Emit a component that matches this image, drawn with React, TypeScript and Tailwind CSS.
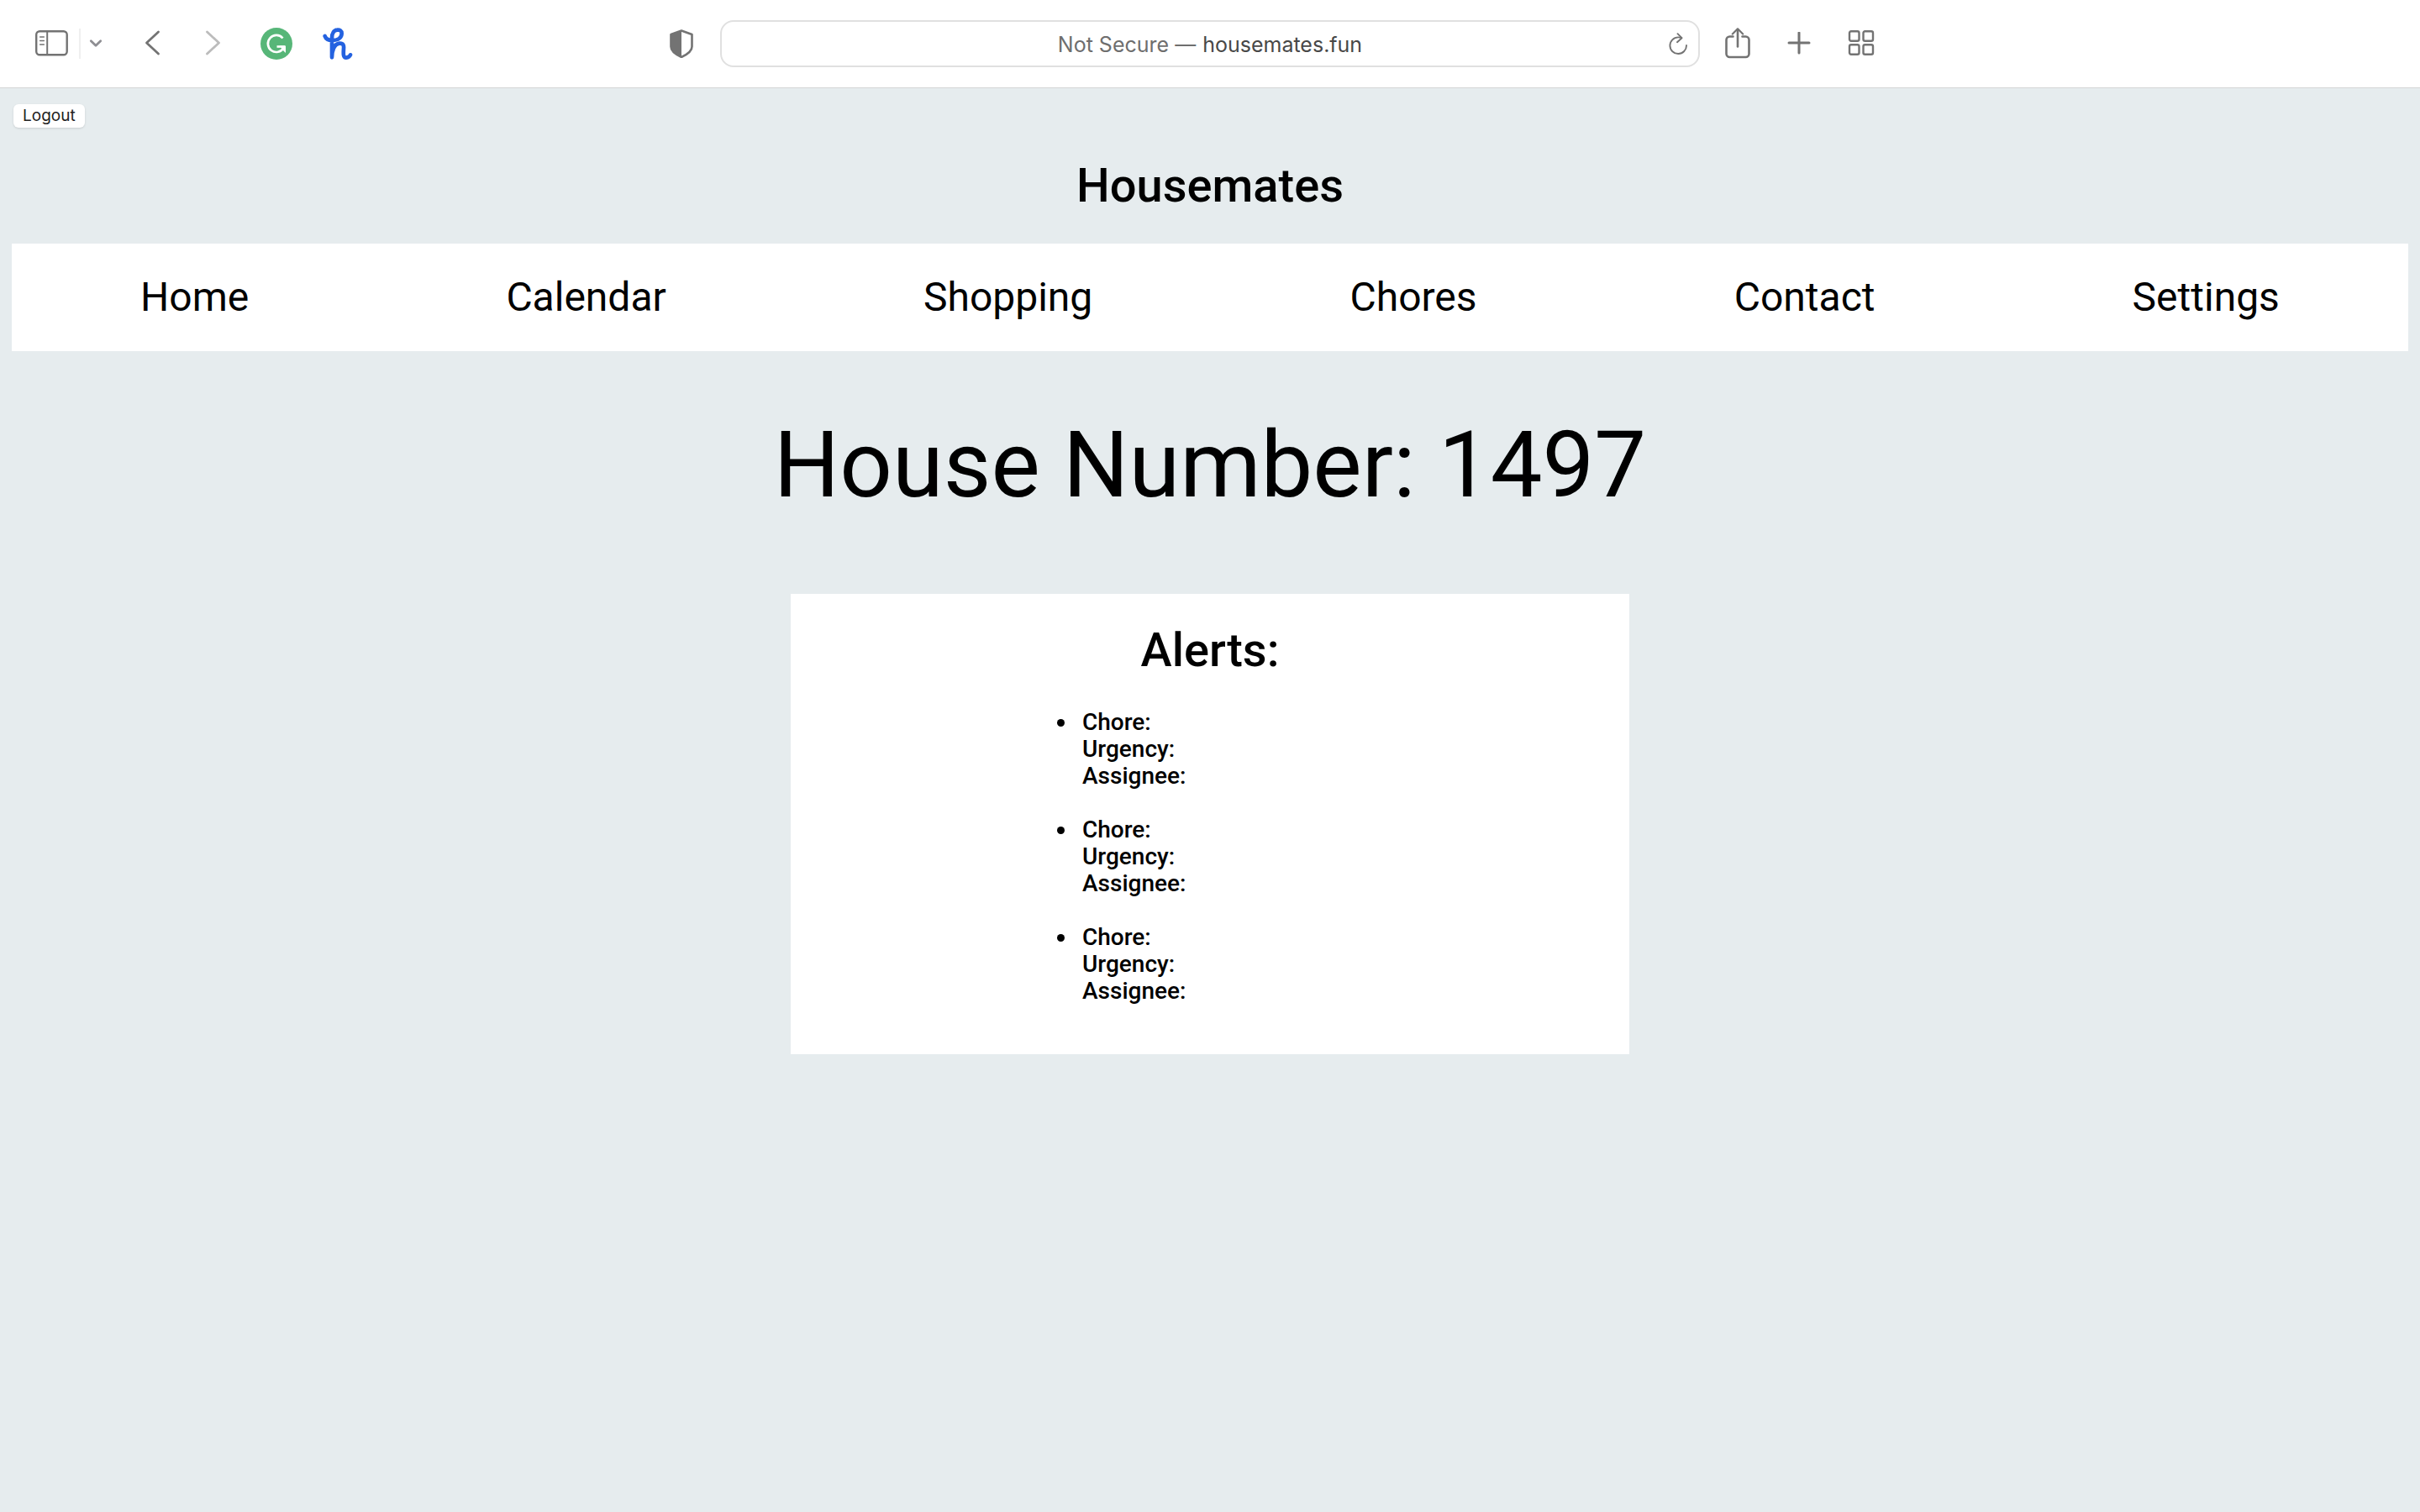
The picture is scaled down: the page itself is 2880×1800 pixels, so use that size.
import type { ReactNode } from "react";

const navLinks = ["Home", "Calendar", "Shopping", "Chores", "Contact", "Settings"];
const alerts = [1, 2, 3];

function IconButton({ label, children }: { label: string; children: ReactNode }) {
  return (
    <button type="button" aria-label={label} className="flex shrink-0 items-center justify-center text-[#737373]">
      {children}
    </button>
  );
}

function SidebarIcon() {
  return (
    <svg className="h-8 w-10" viewBox="0 0 40 32" fill="none" stroke="currentColor" strokeWidth="2.400">
      <rect x="2.200" y="1.200" width="36.500" height="28" rx="4" />
      <path d="M15.200 1.200v28" strokeWidth="2" />
      <path d="M6.700 8h4.600M6.700 12.500h4.600M6.700 17h4.600" strokeWidth="1.600" strokeLinecap="round" />
    </svg>
  );
}

function ChevronDownIcon() {
  return (
    <svg className="h-4 w-4 text-[#8e8e93]" viewBox="0 0 16 16" fill="none" stroke="currentColor" strokeWidth="2.800" strokeLinecap="round" strokeLinejoin="round">
      <path d="M2.300 4.700 8 10.200l5.700-5.500" />
    </svg>
  );
}

function BackIcon() {
  return (
    <svg className="h-8 w-5" viewBox="0 0 20 32" fill="none" stroke="currentColor" strokeWidth="2.800" strokeLinecap="round" strokeLinejoin="round">
      <path d="M16.500 2 2.500 15l14 13" />
    </svg>
  );
}

function ForwardIcon() {
  return (
    <svg className="h-8 w-5 text-[#bcbcbc]" viewBox="0 0 20 32" fill="none" stroke="currentColor" strokeWidth="2.800" strokeLinecap="round" strokeLinejoin="round">
      <path d="m2.500 2 14 13-14 13" />
    </svg>
  );
}

function GrammarlyIcon() {
  return (
    <svg className="h-[38px] w-[38px]" viewBox="0 0 38 38" fill="none">
      <circle cx="19" cy="19" r="19" fill="#57b678" />
      <path d="M26.500 12.500A10 10 0 1 0 27.500 24" stroke="#fff" strokeWidth="2.700" />
      <path d="M19.500 22.500H29" stroke="#fff" strokeWidth="2.600" />
      <path d="M22.500 21.500H30V30l-2.600-2.500z" fill="#fff" />
    </svg>
  );
}

function HoneyIcon() {
  return (
    <svg className="h-[38px] w-9" viewBox="0 0 108 114" fill="none" stroke="#2462e0" strokeWidth="14" strokeLinecap="round" strokeLinejoin="round">
      <path d="M8 30C12 42 20 45 34 45C56 45 68 35 68 20C68 11 61 7 52 8C40 9 33 20 33 36V106C33 84 40 58 60 56C74 55 76 64 75 74C74 90 72 107 84 107C92 107 98 100 99 97" />
    </svg>
  );
}

function ShieldIcon() {
  return (
    <svg className="h-[34px] w-7" viewBox="0 0 28 34" fill="none">
      <path d="M14 1.500 26.500 6v14.500c0 6-6 9.500-12.500 12.500C7.500 30 1.500 26.500 1.500 20.500V6z" stroke="currentColor" strokeWidth="2.600" strokeLinejoin="round" />
      <path d="M14 1.500V33C7.500 30 1.500 26.500 1.500 20.500V6z" fill="currentColor" />
    </svg>
  );
}

function ReloadIcon() {
  return (
    <svg className="h-[26px] w-6" viewBox="0 0 24 26" fill="none" stroke="currentColor" strokeWidth="1.900" strokeLinecap="round" strokeLinejoin="round">
      <path d="M22 15A9.800 9.800 0 1 1 12.200 5.400q2.200 0 4 .700" />
      <path d="m11.500 1.200 5 5-5.500 5" />
    </svg>
  );
}

function ShareIcon() {
  return (
    <svg className="h-[38px] w-[30px]" viewBox="0 0 30 38" fill="none" stroke="currentColor" strokeWidth="2.600" strokeLinecap="round" strokeLinejoin="round">
      <path d="M9.500 10.500H5.500a4 4 0 0 0-4 4v16.500a4 4 0 0 0 4 4h19a4 4 0 0 0 4-4V14.500a4 4 0 0 0-4-4h-4" />
      <path d="M15 22.500V2" />
      <path d="M8.800 7.500 15 1.300 21.200 7.500" strokeWidth="2.200" />
    </svg>
  );
}

function PlusIcon() {
  return (
    <svg className="h-7 w-7" viewBox="0 0 28 28" fill="none" stroke="currentColor" strokeWidth="3" strokeLinecap="round">
      <path d="M14 1v24M2 13h24" />
    </svg>
  );
}

function TabsIcon() {
  return (
    <svg className="h-8 w-8" viewBox="0 0 32 32" fill="none" stroke="currentColor" strokeWidth="2.400">
      <rect x="2" y="1.300" width="11.500" height="11.500" rx="2" />
      <rect x="18.500" y="1.300" width="11.500" height="11.500" rx="2" />
      <rect x="2" y="17.300" width="11.500" height="11.500" rx="2" />
      <rect x="18.500" y="17.300" width="11.500" height="11.500" rx="2" />
    </svg>
  );
}

function BrowserToolbar() {
  return (
    <div className="grid h-[105px] grid-cols-[25fr_34fr_25fr] items-center border-b border-[#d4d6d6] bg-white font-[Inter,sans-serif]">
      <div className="flex items-center justify-between pr-8 pl-[41px]">
        <div className="flex items-center">
          <IconButton label="Show sidebar"><SidebarIcon /></IconButton>
          <div className="ml-[13px] h-9 w-0.5 bg-[#efefef]" />
          <div className="ml-2.5 flex"><IconButton label="Tab groups"><ChevronDownIcon /></IconButton></div>
          <div className="ml-[50px] flex gap-[52px]">
            <IconButton label="Back"><BackIcon /></IconButton>
            <IconButton label="Forward"><ForwardIcon /></IconButton>
          </div>
          <div className="ml-[46px] flex gap-9">
            <IconButton label="Grammarly"><GrammarlyIcon /></IconButton>
            <IconButton label="Honey"><HoneyIcon /></IconButton>
          </div>
        </div>
        <IconButton label="Privacy report"><ShieldIcon /></IconButton>
      </div>
      <div className="flex h-14 items-center rounded-2xl border-2 border-[#e0e0e0] pr-3 pl-9 text-[25px] leading-8">
        <div className="flex flex-1 items-center justify-center gap-2 pt-0.5">
          <label htmlFor="address" className="text-[#6e6e6e]">Not Secure —</label>
          <input id="address" type="text" defaultValue="housemates.fun" className="field-sizing-content bg-transparent text-[#484848] outline-none" />
        </div>
        <IconButton label="Reload"><ReloadIcon /></IconButton>
      </div>
      <div className="flex items-center gap-11 pl-[30px]">
        <IconButton label="Share"><ShareIcon /></IconButton>
        <IconButton label="New tab"><PlusIcon /></IconButton>
        <IconButton label="Tab overview"><TabsIcon /></IconButton>
      </div>
    </div>
  );
}

export default function App() {
  return (
    <div className="min-h-screen bg-[#e6ecee] font-[Roboto,sans-serif] text-black">
      <BrowserToolbar />
      <div className="px-3.5">
        <div className="flex pt-[19px] pl-0.5">
          <button type="button" className="h-7 rounded-md bg-white px-[11px] font-[Inter,sans-serif] text-[19px] leading-7 text-[#222222] shadow-sm">
            Logout
          </button>
        </div>
        <h1 className="mt-[37px] text-center text-[56px] leading-16 font-medium">Housemates</h1>
        <nav className="mt-[37px] flex h-32 items-center justify-around bg-white text-5xl">
          {navLinks.map((name) => (
            <a key={name} href={"#" + name.toLowerCase()}>{name}</a>
          ))}
        </nav>
        <main>
          <h2 className="mt-18 text-center text-[110px] leading-[128px] font-[450]">House Number: 1497</h2>
          <section className="mx-auto mt-[89px] w-[35%] bg-white pt-[35px] pb-[59px]">
            <h3 className="text-center text-[56px] leading-16 font-medium">Alerts:</h3>
            <ul className="mx-auto mt-[38px] flex w-[316px] list-disc flex-col gap-8 text-[28px] leading-8 font-medium">
              {alerts.map((id) => (
                <li key={id} className="pl-1.5">
                  <p>Chore:</p>
                  <p>Urgency:</p>
                  <p>Assignee:</p>
                </li>
              ))}
            </ul>
          </section>
        </main>
      </div>
    </div>
  );
}
